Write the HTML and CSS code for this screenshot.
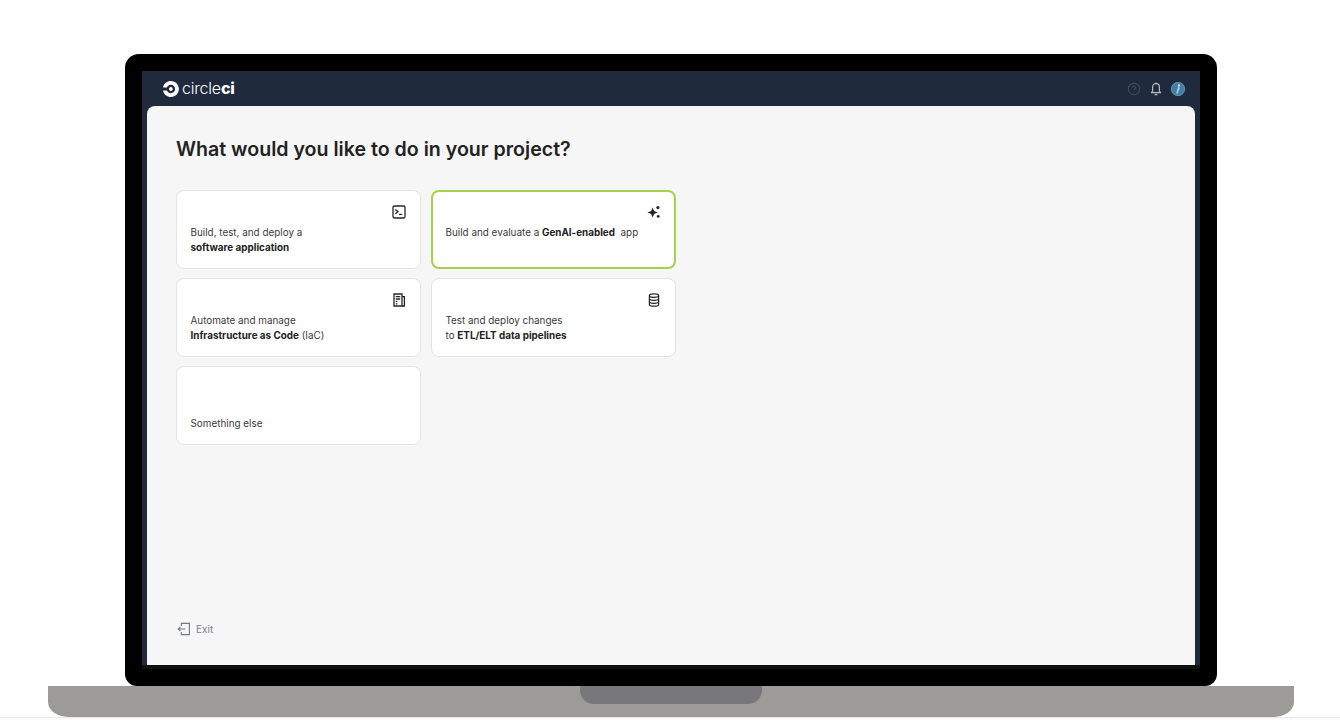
FILE: index.html
```html
<!DOCTYPE html>
<html lang="en">
<head>
    <meta charset="UTF-8">
    <meta name="viewport" content="width=device-width, initial-scale=1.0">
    <title>CircleCI - New project</title>
    <link rel="stylesheet" href="styles.css">
</head>
<body>
    <div class="laptop">
        <div class="bezel">
            <div class="screen">
                <header class="topbar">
                    <div class="logo">
                        <svg class="logo-mark" viewBox="0 0 24 24" fill="#fff"><path d="M8.963 12c0-1.584 1.284-2.855 2.855-2.855 1.572 0 2.856 1.284 2.856 2.855 0 1.572-1.284 2.856-2.856 2.856-1.57 0-2.855-1.284-2.855-2.856zm2.855-12C6.215 0 1.522 3.84.19 9.025c-.01.036-.01.07-.01.12 0 .313.252.576.575.576H5.59c.23 0 .433-.13.517-.333.997-2.16 3.18-3.672 5.712-3.672 3.466 0 6.286 2.82 6.286 6.287 0 3.47-2.82 6.29-6.29 6.29-2.53 0-4.714-1.5-5.71-3.673-.097-.19-.29-.336-.517-.336H.755c-.312 0-.575.253-.575.576 0 .037.014.072.014.12C1.514 20.16 6.214 24 11.818 24c6.624 0 12-5.376 12-12 0-6.623-5.376-12-12-12z"/></svg>
                        <span class="logo-text">circle<b>ci</b></span>
                    </div>
                    <div class="topbar-icons">
                        <svg class="top-icon" viewBox="0 0 14 14" fill="none" stroke="#414b5e" stroke-width="1.1"><circle cx="7" cy="7" r="5.7"/><path d="M5.4 5.5a1.6 1.6 0 1 1 2.4 1.4c-.5.3-.8.6-.8 1.2"/><path d="M7 9.6v.8"/></svg>
                        <svg class="top-icon" viewBox="0 0 14 14" fill="none" stroke="#b9bcc2" stroke-width="1.2"><path d="M2.4 10.6h9.2L10.4 9V5a3.4 3.4 0 0 0-6.8 0v4z" stroke-linejoin="round"/><path d="M7 .6v1M5.6 12.6h2.8"/></svg>
                        <svg class="top-icon" viewBox="0 0 14 14"><circle cx="7" cy="7" r="7" fill="#3f7ea8"/><circle cx="7" cy="7" r="6.5" fill="none" stroke="#6d8ea6"/><path d="M7.8 3.4 6.4 7 5.2 11.6h1.6L8 8l.8-1.2z" fill="#b9c9d4"/><circle cx="7.9" cy="3.4" r="1.1" fill="#e6ecf0"/></svg>
                    </div>
                </header>
                <main class="panel">
                    <h1 class="panel-title">What would you like to do in your project?</h1>
                    <div class="options">
                        <div class="option">
                            <svg class="option-icon" viewBox="0 0 14 14" fill="none" stroke="#22262b" stroke-width="1.3"><rect x="1" y="1" width="12" height="12" rx="1.4"/><path d="M3.4 4.4 6 6.6 3.4 8.8"/><path d="M7 9.4h3.2"/></svg>
                            <p class="option-text">Build, test, and deploy a<br><b>software application</b></p>
                        </div>
                        <div class="option option-active">
                            <svg class="option-icon" viewBox="0 0 14 14" fill="#22262b"><path d="M5.6 2.4 7.1 6 10.7 7.5 7.1 9 5.6 12.6 4.1 9 .5 7.5 4.1 6z"/><circle cx="10.9" cy="2.6" r="1.6"/><circle cx="11.2" cy="11.4" r="1.4"/></svg>
                            <p class="option-text">Build and evaluate a <b>GenAI-enabled</b>&nbsp; app</p>
                        </div>
                        <div class="option">
                            <svg class="option-icon" viewBox="0 0 14 14" fill="none" stroke="#22262b" stroke-width="1.3"><path d="M2 1h8v12H2z"/><path d="M10 3.6h2.4V13H10"/><path d="M3.8 3.6h4.4M3.8 6h4.4M3.8 8.4h1.6M3.8 10.8h1.6"/></svg>
                            <p class="option-text">Automate and manage<br><b>Infrastructure as Code</b> (IaC)</p>
                        </div>
                        <div class="option">
                            <svg class="option-icon" viewBox="0 0 14 14" fill="none" stroke="#22262b" stroke-width="1.2"><ellipse cx="7" cy="2.6" rx="4.6" ry="1.8"/><path d="M2.4 2.6v8.8c0 1 2 1.8 4.6 1.8s4.6-.8 4.6-1.8V2.6"/><path d="M2.4 5.6c0 1 2 1.8 4.6 1.8s4.6-.8 4.6-1.8"/><path d="M2.4 8.5c0 1 2 1.8 4.6 1.8s4.6-.8 4.6-1.8"/></svg>
                            <p class="option-text">Test and deploy changes<br>to <b>ETL/ELT data pipelines</b></p>
                        </div>
                        <div class="option">
                            <span class="option-icon"></span>
                            <p class="option-text option-text-low">Something else</p>
                        </div>
                    </div>
                    <div class="exit">
                        <svg class="exit-icon" viewBox="0 0 14 14" fill="none" stroke="#6f7787" stroke-width="1.1"><path d="M4.4 4V1.4h8v11.2h-8V10"/><path d="M8.4 7H1.2M3.4 4.8 1.2 7l2.2 2.2"/></svg>
                        <span>Exit</span>
                    </div>
                </main>
            </div>
            <div class="chin"></div>
        </div>
        <div class="base">
            <div class="notch"></div>
        </div>
    </div>
    <div class="floor"></div>
</body>
</html>
```

FILE: styles.css
```css
* {
    margin: 0;
    padding: 0;
    box-sizing: border-box;
    font-family: Inter, "Liberation Sans", sans-serif;
}

body {
    background-color: #fff;
    overflow: hidden;
}

.laptop {
    padding-top: 54px;
}

.bezel {
    width: 1092px;
    height: 632px;
    margin-left: 125px;
    padding: 17px 17px 0;
    background-color: #000;
    border-radius: 14px 14px 12px 12px;
}

.screen {
    height: 594px;
    display: flex;
    flex-direction: column;
    background-color: #1f2a3d;
}

.chin {
    height: 4px;
    background-color: #101010;
}

.topbar {
    height: 35px;
    flex-shrink: 0;
    display: flex;
    align-items: center;
    justify-content: space-between;
    padding: 0 15px 0 21px;
}

.logo {
    display: flex;
    align-items: center;
    gap: 3px;
}

.logo-mark {
    width: 16px;
    height: 16px;
    margin-top: 1px;
}

.logo-text {
    color: #fff;
    font-size: 16px;
    font-weight: 300;
    letter-spacing: -0.2px;
    margin-top: -2px;
}

.logo-text b {
    font-weight: 800;
}

.topbar-icons {
    display: flex;
    align-items: center;
    gap: 8px;
}

.top-icon {
    width: 14px;
    height: 14px;
    display: block;
}

.panel {
    flex: 1;
    margin: 0 5px;
    padding: 31px 29px 29px;
    display: flex;
    flex-direction: column;
    background-color: #f6f6f6;
    border-radius: 8px 8px 0 0;
}

.panel-title {
    font-size: 19.6px;
    line-height: 25px;
    font-weight: 600;
    color: #222;
    margin-bottom: 28px;
}

.options {
    display: grid;
    grid-template-columns: repeat(2, 245px);
    grid-auto-rows: 79px;
    gap: 9px 10px;
}

.option {
    display: flex;
    flex-direction: column;
    padding: 14px 14px 0 13.5px;
    background-color: #fff;
    border: 1px solid #e3e3e3;
    border-radius: 8px;
}

.option-active {
    border: 2px solid #a9cf4e;
    padding: 13px 13px 0 12.5px;
}

.option-icon {
    display: block;
    width: 14px;
    height: 14px;
    align-self: flex-end;
    flex-shrink: 0;
}

.option-text {
    margin-top: 6px;
    font-size: 9.9px;
    line-height: 15px;
    color: #3a3a3a;
}

.option-text b {
    font-weight: 700;
    color: #222;
}

.option-text-low {
    margin-top: 21px;
}

.exit {
    margin-top: auto;
    display: flex;
    align-items: center;
    gap: 5px;
    padding-left: 1px;
    font-size: 10px;
    color: #7b8394;
}

.exit-icon {
    width: 14px;
    height: 14px;
}

.base {
    width: 1246px;
    height: 31px;
    margin-left: 48px;
    display: flex;
    justify-content: center;
    background-color: #9c9b98;
    border-radius: 0 0 20px 20px / 0 0 15px 15px;
}

.notch {
    width: 182px;
    height: 18px;
    background-color: #78787c;
    border-radius: 0 0 14px 14px;
}

.floor {
    height: 3px;
    border-top: 1px solid #e9e9e9;
    background-color: #fafafa;
}
```
